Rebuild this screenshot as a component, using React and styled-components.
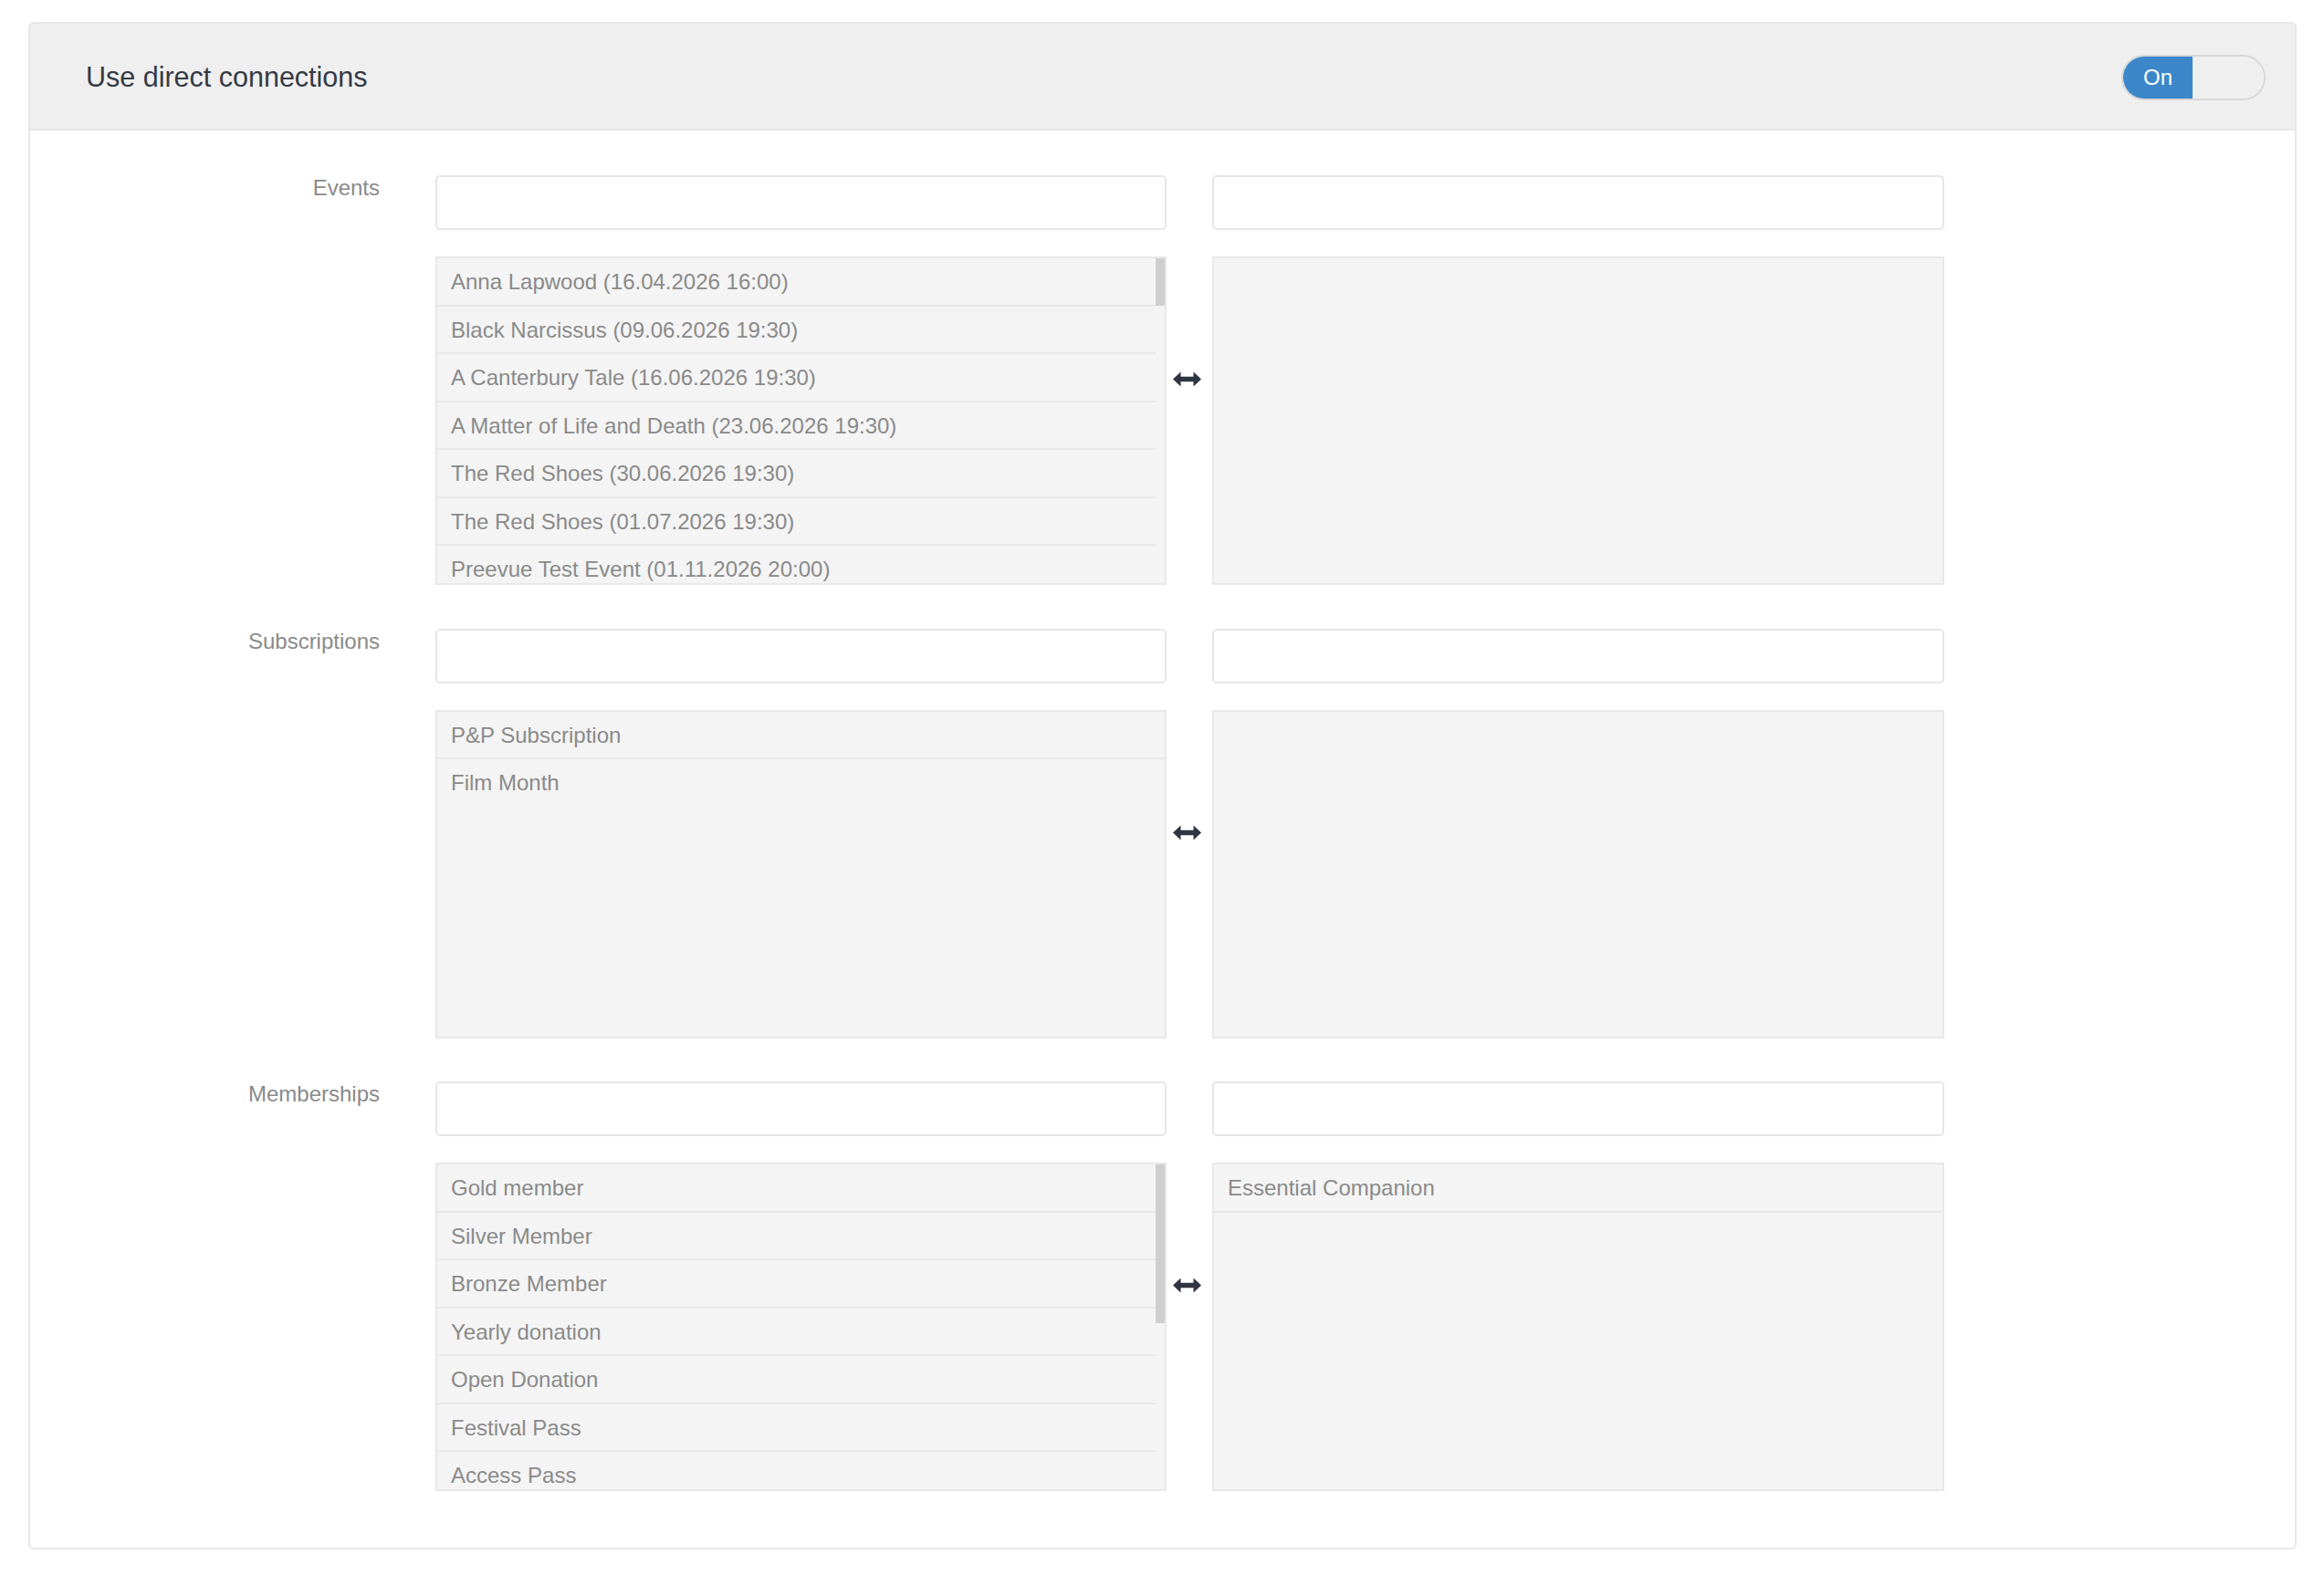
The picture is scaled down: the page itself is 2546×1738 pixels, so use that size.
import React from 'react';
import styled, { createGlobalStyle } from 'styled-components';

const sections = [
  {
    label: 'Events',
    thumb: 52,
    available: [
      'Anna Lapwood (16.04.2026 16:00)',
      'Black Narcissus (09.06.2026 19:30)',
      'A Canterbury Tale (16.06.2026 19:30)',
      'A Matter of Life and Death (23.06.2026 19:30)',
      'The Red Shoes (30.06.2026 19:30)',
      'The Red Shoes (01.07.2026 19:30)',
      'Preevue Test Event (01.11.2026 20:00)'
    ],
    selected: []
  },
  {
    label: 'Subscriptions',
    available: ['P&P Subscription', 'Film Month'],
    selected: []
  },
  {
    label: 'Memberships',
    thumb: 174,
    available: [
      'Gold member',
      'Silver Member',
      'Bronze Member',
      'Yearly donation',
      'Open Donation',
      'Festival Pass',
      'Access Pass'
    ],
    selected: ['Essential Companion']
  }
];

const GlobalStyle = createGlobalStyle`
  body {
    margin: 0;
    background: #fff;
    font-family: "Liberation Sans", Arial, Helvetica, sans-serif;
  }
`;

const SwapIcon = () => (
  <svg width="31" height="17" viewBox="0 0 31 17">
    <path d="M0 8.5 L8.5 0.5 V5.7 H22.5 V0.5 L31 8.5 L22.5 16.5 V11.3 H8.5 V16.5 Z" fill="#2f3542" />
  </svg>
);

const ItemList = ({ items, thumb }) => (
  <ListBox>
    <Items>
      {items.map(item => <Item key={item}>{item}</Item>)}
    </Items>
    {thumb && (
      <ScrollTrack>
        <ScrollThumb $height={thumb} />
      </ScrollTrack>
    )}
  </ListBox>
);

export default function App() {
  return (
    <Page>
      <GlobalStyle />
      <Panel>
        <Header>
          <Title>Use direct connections</Title>
          <Toggle>
            <ToggleOn>On</ToggleOn>
            <ToggleOff />
          </Toggle>
        </Header>
        <Body>
          {sections.map(section => (
            <Section key={section.label}>
              <Label>{section.label}</Label>
              <SearchInput type="text" $col={2} />
              <Swap>
                <SwapIcon />
              </Swap>
              <SearchInput type="text" $col={4} />
              <ListCell $col={2}>
                <ItemList items={section.available} thumb={section.thumb} />
              </ListCell>
              <ListCell $col={4}>
                <ItemList items={section.selected} />
              </ListCell>
            </Section>
          ))}
        </Body>
      </Panel>
    </Page>
  );
}

const Page = styled.div`
  padding: 24px 30px 40px 31px;
`;
const Panel = styled.div`
  border: 2px solid #e7e7e7;
  border-radius: 6px;
  overflow: hidden;
`;
const Header = styled.div`
  height: 115px;
  display: flex;
  align-items: center;
  justify-content: space-between;
  padding: 2px 32px 0 61px;
  box-sizing: content-box;
  height: 113px;
  background: #efefef;
  border-bottom: 2px solid #e7e7e7;
`;
const Title = styled.h2`
  margin: 0;
  font-size: 30.5px;
  font-weight: 400;
  color: #343a46;
`;
const Toggle = styled.div`
  display: flex;
  width: 158px;
  height: 50px;
  box-sizing: border-box;
  border: 2px solid #d7d7d7;
  border-radius: 25px;
  overflow: hidden;
`;
const ToggleOn = styled.div`
  width: 76px;
  display: flex;
  align-items: center;
  justify-content: center;
  background: #3b87c9;
  color: #fff;
  font-size: 24px;
`;
const ToggleOff = styled.div`
  flex: 1;
  background: #efefef;
`;
const Body = styled.div`
  padding: 49px 0 14px;
`;
const Section = styled.div`
  display: grid;
  grid-template-columns: 444px 801px 50px 802px;
  grid-template-rows: 60px 360px;
  row-gap: 29px;
  margin-bottom: 47.5px;
`;
const Label = styled.div`
  grid-column: 1;
  grid-row: 1;
  padding-right: 61px;
  text-align: right;
  font-size: 24px;
  color: #8a8a8a;
`;
const SearchInput = styled.input`
  grid-column: ${p => p.$col};
  grid-row: 1;
  box-sizing: border-box;
  width: 100%;
  height: 60px;
  margin: 0;
  border: 2px solid #e6e6e6;
  border-radius: 5px;
  background: #fff;
  outline: none;
`;
const Swap = styled.div`
  grid-column: 3;
  grid-row: 1 / span 2;
  display: flex;
  align-items: center;
  justify-content: center;
  padding: 0 5px 2px 0;
`;
const ListCell = styled.div`
  grid-column: ${p => p.$col};
  grid-row: 2;
`;
const ListBox = styled.div`
  display: flex;
  height: 360px;
  box-sizing: border-box;
  border: 2px solid #e8e8e8;
  background: #f4f4f4;
  overflow: hidden;
`;
const Items = styled.div`
  flex: 1;
  min-width: 0;
`;
const Item = styled.div`
  padding: 13px 15px 11.5px;
  line-height: 26px;
  font-size: 24px;
  color: #8a8a8a;
  white-space: nowrap;
  border-bottom: 2px solid #e8e8e8;

  &:last-child:not(:first-child) {
    border-bottom: none;
  }
`;
const ScrollTrack = styled.div`
  width: 10px;
`;
const ScrollThumb = styled.div`
  height: ${p => p.$height}px;
  background: #cfcfcf;
`;
